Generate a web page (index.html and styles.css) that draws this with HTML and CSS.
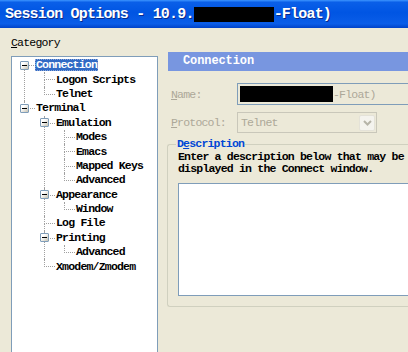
FILE: index.html
```html
<!DOCTYPE html>
<html lang="en">
<head>
    <meta charset="UTF-8">
    <title>Session Options</title>
    <link rel="stylesheet" href="styles.css">
</head>
<body>

    <!-- Title bar -->
    <div class="titlebar">
        <span class="title">Session Options - 10.9.</span><span class="redact title-redact"></span><span class="title">-Float)</span>
    </div>

    <div class="main">
        <!-- Category tree -->
        <div class="left">
            <div class="category"><u>C</u>ategory</div>
            <div class="tree-box">
                <ul class="tree">
                    <li>
                        <div class="node"><span class="slot"><span class="toggle"></span></span><span class="label selected">Connection</span></div>
                        <ul>
                            <li><div class="node"><span class="slot"></span><span class="label">Logon Scripts</span></div></li>
                            <li><div class="node"><span class="slot"></span><span class="label">Telnet</span></div></li>
                        </ul>
                    </li>
                    <li>
                        <div class="node"><span class="slot"><span class="toggle"></span></span><span class="label">Terminal</span></div>
                        <ul>
                            <li>
                                <div class="node"><span class="slot"><span class="toggle"></span></span><span class="label">Emulation</span></div>
                                <ul>
                                    <li><div class="node"><span class="slot"></span><span class="label">Modes</span></div></li>
                                    <li><div class="node"><span class="slot"></span><span class="label">Emacs</span></div></li>
                                    <li><div class="node"><span class="slot"></span><span class="label">Mapped Keys</span></div></li>
                                    <li><div class="node"><span class="slot"></span><span class="label">Advanced</span></div></li>
                                </ul>
                            </li>
                            <li>
                                <div class="node"><span class="slot"><span class="toggle"></span></span><span class="label">Appearance</span></div>
                                <ul>
                                    <li><div class="node"><span class="slot"></span><span class="label">Window</span></div></li>
                                </ul>
                            </li>
                            <li><div class="node"><span class="slot"></span><span class="label">Log File</span></div></li>
                            <li>
                                <div class="node"><span class="slot"><span class="toggle"></span></span><span class="label">Printing</span></div>
                                <ul>
                                    <li><div class="node"><span class="slot"></span><span class="label">Advanced</span></div></li>
                                </ul>
                            </li>
                            <li><div class="node"><span class="slot"></span><span class="label">Xmodem/Zmodem</span></div></li>
                        </ul>
                    </li>
                </ul>
            </div>
        </div>

        <!-- Connection page -->
        <div class="right">
            <div class="page-header">Connection</div>

            <div class="form-row name-row">
                <div class="field-label"><u>N</u>ame:</div>
                <div class="edit">
                    <span class="redact edit-redact"></span><span class="edit-text">-Float)</span>
                </div>
            </div>

            <div class="form-row protocol-row">
                <div class="field-label"><u>P</u>rotocol:</div>
                <div class="combo">
                    <span class="combo-text">Telnet</span>
                    <span class="combo-btn">
                        <svg width="9" height="6" viewBox="0 0 9 6"><path d="M1 1 L4.5 4.5 L8 1" fill="none" stroke="#b6b4a8" stroke-width="2"/></svg>
                    </span>
                </div>
            </div>

            <fieldset class="group">
                <legend>D<u>e</u>scription</legend>
                <div class="group-text">Enter a description below that may be</div>
                <div class="group-text">displayed in the Connect window.</div>
                <div class="memo"></div>
            </fieldset>
        </div>
    </div>

</body>
</html>
```

FILE: styles.css
```css
body {
    margin: 0;
    width: 408px;
    height: 352px;
    overflow: hidden;
    background-color: #ece9d8;
    font-family: "Liberation Mono", "DejaVu Sans Mono", monospace;
    font-size: 11.5px;
    letter-spacing: -0.8px;
    color: #000;
}

u {
    text-decoration: underline;
}

/* Title bar */
.titlebar {
    height: 28px;
    display: flex;
    align-items: center;
    padding-left: 5px;
    background: linear-gradient(to bottom, #3d95ff 0%, #0a5fe8 8%, #0055e3 45%, #0a5de8 85%, #0042c8 100%);
    white-space: nowrap;
}

.title {
    color: #fff;
    font-weight: bold;
    font-size: 15px;
    letter-spacing: -0.8px;
    text-shadow: 1px 1px 0 #0a2a8a;
}

.redact {
    display: inline-block;
    background: #000;
}

.title-redact {
    width: 80px;
    height: 15px;
}

/* Layout */
.main {
    display: flex;
    padding-left: 11px;
}

.left {
    width: 147px;
    flex-shrink: 0;
}

.right {
    width: 260px;
    flex-shrink: 0;
    margin-left: 10px;
    padding-top: 24px;
}

.category {
    margin-top: 9px;
    height: 12px;
    line-height: 12px;
    margin-bottom: 7px;
}

/* Tree */
.tree-box {
    height: 300px;
    background: #fff;
    border: 1px solid #7f9db9;
    padding: 1px 0 0 3px;
}

.tree,
.tree ul {
    list-style: none;
    margin: 0;
    padding: 0;
}

.tree ul {
    padding-left: 20px;
}

.tree li {
    position: relative;
}

.tree li::before {
    content: "";
    position: absolute;
    left: 9px;
    top: 0;
    width: 10px;
    height: 7px;
    border-left: 1px dotted #a0a0a0;
    border-bottom: 1px dotted #a0a0a0;
}

.tree > li:first-child::before {
    top: 7px;
    height: 0;
    border-left: none;
}

.tree li:not(:last-child)::after {
    content: "";
    position: absolute;
    left: 9px;
    top: 7px;
    bottom: 0;
    border-left: 1px dotted #a0a0a0;
}

.node {
    display: flex;
    align-items: center;
    height: 14.4px;
}

.slot {
    width: 20px;
    height: 9px;
    flex-shrink: 0;
    display: flex;
}

.toggle {
    position: relative;
    z-index: 1;
    width: 7px;
    height: 7px;
    margin-left: 5px;
    border: 1px solid #7f9db9;
    border-radius: 1px;
    background: linear-gradient(135deg, #ffffff 30%, #c6c2b2 100%);
}

.toggle::after {
    content: "";
    position: absolute;
    left: 1px;
    top: 3px;
    width: 5px;
    height: 1px;
    background: #000;
}

.label {
    padding: 0 1px;
    height: 12px;
    line-height: 12px;
    white-space: nowrap;
    font-weight: bold;
}

.label.selected {
    background: #316ac5;
    color: #fff;
    outline: 1px dotted #8aa6d8;
    outline-offset: -1px;
}

/* Page */
.page-header {
    height: 19px;
    line-height: 19px;
    padding-left: 15px;
    background: #7896e0;
    color: #fff;
    font-weight: bold;
    font-size: 12px;
    letter-spacing: -0.1px;
}

.form-row {
    display: flex;
    align-items: center;
}

.name-row {
    margin-top: 12px;
}

.protocol-row {
    margin-top: 7px;
}

.field-label {
    width: 66px;
    padding-left: 3px;
    color: #aca899;
}

.edit {
    flex: 1;
    height: 20px;
    display: flex;
    align-items: center;
    padding-left: 2px;
    border: 1px solid #7f9db9;
    border-right: none;
}

.edit-redact {
    width: 93px;
    height: 16px;
}

.edit-text,
.combo-text {
    color: #aca899;
}

.combo {
    width: 135px;
    height: 19px;
    display: flex;
    align-items: center;
    justify-content: space-between;
    padding-left: 3px;
    border: 1px solid #c9c7ba;
}

.combo-btn {
    width: 16px;
    height: 16px;
    margin-right: 1px;
    display: flex;
    align-items: center;
    justify-content: center;
    background: #f4f3ee;
    border: 1px solid #e4e2d8;
    border-radius: 2px;
    box-sizing: border-box;
}

.group {
    margin: 5px 0 0 -1px;
    padding: 0 0 10px 10px;
    border: 1px solid #d0d0bf;
    border-right: none;
    border-radius: 3px 0 0 3px;
}

.group legend {
    margin-left: -2px;
    padding: 0 1px;
    line-height: 12px;
    color: #0046d5;
    font-weight: bold;
}

.group-text {
    height: 12px;
    line-height: 12px;
    white-space: nowrap;
    font-weight: bold;
}

.group-text:first-of-type {
    margin-top: 1px;
}

.memo {
    margin-top: 8px;
    height: 111px;
    background: #fff;
    border: 1px solid #7f9db9;
    border-right: none;
}
```
